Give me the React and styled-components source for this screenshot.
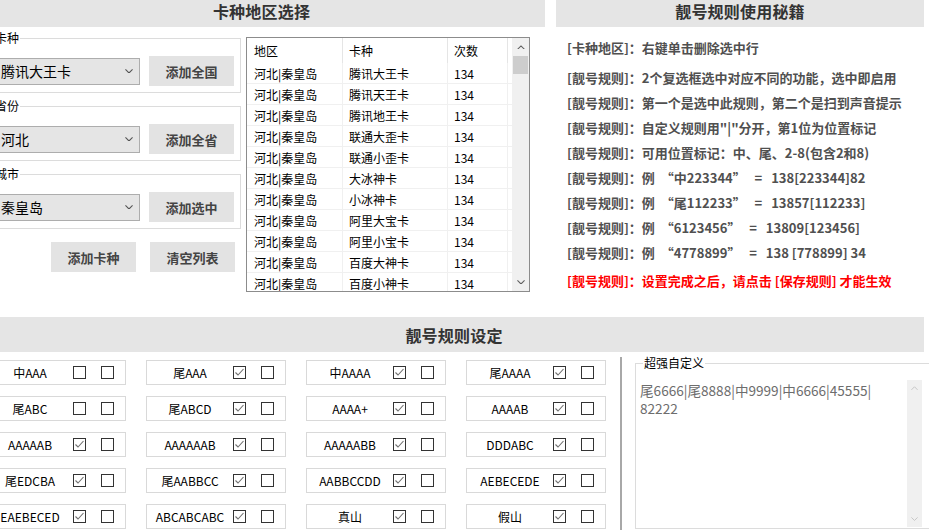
import React from "react";
import styled, { createGlobalStyle } from "styled-components";

const Global = createGlobalStyle`
  html, body { margin: 0; padding: 0; background: #fff; }
  body { font-family: "Noto Sans CJK SC", "Noto Sans", sans-serif; }
  * { box-sizing: border-box; }
`;

const Root = styled.div`
  width: 929px;
  height: 530px;
  overflow: hidden;
  background: #fff;
  color: #000;
`;

const Top = styled.div`
  display: flex;
  height: 317px;
`;

const LeftPanel = styled.section`
  flex: none;
  width: 567px;
  margin-left: -22px;
`;

const RightPanel = styled.section`
  flex: none;
  width: 368px;
  margin-left: 11px;
`;

const Header = styled.div`
  height: 35px;
  margin-top: ${(p) => p.$offset || 0}px;
  padding-top: ${(p) => (p.$offset ? 2 : 0)}px;
  background: #e5e5e5;
  display: flex;
  align-items: center;
  justify-content: center;
  font-size: 16px;
  line-height: 16px;
  font-weight: bold;
  color: #333;
  letter-spacing: 0.2px;
`;

const LeftBody = styled.div`
  display: flex;
  align-items: flex-start;
  gap: 5px;
  padding-left: 8px;
  padding-top: 4px;
`;

const FormColumn = styled.div`
  width: 255px;
  flex: none;
`;

const Group = styled.fieldset`
  margin: 0;
  padding: 11px 6px 6px 11px;
  border: 1px solid #dcdcdc;
  min-width: 0;
  & + & { margin-top: 6px; }
`;

const Legend = styled.legend`
  padding: 0 1px;
  margin-left: ${(p) => p.$ml ?? -4}px;
  font-size: 12px;
  line-height: 14px;
  color: #000;
`;

const FieldRow = styled.div`
  display: flex;
  align-items: center;
  gap: 9px;
  height: 30px;
`;

const Combo = styled.div`
  width: 142px;
  height: 27px;
  background: #e5e5e5;
  border: 1px solid #adadad;
  display: flex;
  align-items: center;
  justify-content: space-between;
  padding: 0 6px 0 2px;
  font-size: 14px;
  color: #000;
`;

const Button = styled.div`
  width: 85px;
  height: 30px;
  flex: none;
  background: #e3e3e3;
  display: flex;
  align-items: center;
  justify-content: center;
  font-size: 13px;
  font-weight: bold;
  color: #444;
`;

const ButtonsRow = styled.div`
  display: flex;
  justify-content: flex-end;
  gap: 14px;
  margin-top: 13px;
  padding-right: 6px;
`;

const List = styled.div`
  margin-top: 6px;
  width: 284px;
  height: 255px;
  border: 1px solid #8c8c8c;
  display: flex;
  flex: none;
`;

const Table = styled.div`
  flex: 1;
  display: grid;
  grid-template-columns: 96px 105px 60px 1fr;
  grid-template-rows: 25px;
  grid-auto-rows: 21px;
  align-content: start;
  overflow: hidden;
  font-size: 12px;
`;

const HeadCell = styled.div`
  display: flex;
  align-items: center;
  padding-left: ${(p) => p.$pad ?? 7}px;
  border-right: ${(p) => (p.$last ? "none" : "1px solid #e5e5e5")};
`;

const Cell = styled.div`
  display: flex;
  align-items: center;
  padding-left: ${(p) => p.$pad ?? 7}px;
  border-right: ${(p) => (p.$last ? "none" : "1px solid #f0f0f0")};
  border-bottom: 1px solid #f0f0f0;
  white-space: nowrap;
`;

const VScroll = styled.div`
  width: ${(p) => p.$w || 17}px;
  flex: none;
  background: #f0f0f0;
  display: flex;
  flex-direction: column;
  align-items: center;
  margin-top: ${(p) => p.$mt || 0}px;
`;

const Arrow = styled.div`
  height: ${(p) => p.$h || 18}px;
  width: 100%;
  display: flex;
  align-items: center;
  justify-content: center;
`;

const Thumb = styled.div`
  width: 15px;
  height: 18px;
  background: #cdcdcd;
`;

const Spacer = styled.div`
  flex: 1;
`;

const Tips = styled.div`
  padding: 8px 0 0 11px;
`;

const Tip = styled.div`
  height: 25px;
  line-height: 25px;
  font-size: 13px;
  font-weight: bold;
  color: ${(p) => (p.$red ? "#ff0000" : "#505050")};
  white-space: pre;
  margin-bottom: ${(p) => p.$mb || 0}px;
  margin-top: ${(p) => p.$mt || 0}px;
`;

const Bottom = styled.section`
  margin-left: -16px;
  width: 940px;
`;

const BottomHeader = styled(Header)`
  width: 940px;
`;

const BottomBody = styled.div`
  display: flex;
  align-items: flex-start;
  height: 178px;
  padding-left: 2px;
  padding-top: 8px;
`;

const RuleGrid = styled.div`
  display: grid;
  grid-template-columns: repeat(4, 140px);
  grid-auto-rows: 25px;
  column-gap: 20px;
  row-gap: 11px;
  flex: none;
`;

const Rule = styled.div`
  border: 1px solid #d9d9d9;
  display: flex;
  align-items: center;
`;

const RuleLabel = styled.div`
  width: 86px;
  text-align: center;
  font-size: 12px;
  white-space: nowrap;
  color: #000;
`;

const Box = styled.span`
  width: 13px;
  height: 13px;
  border: 1px solid #333;
  background: #fff;
  display: inline-flex;
  align-items: center;
  justify-content: center;
  flex: none;
  & + & { margin-left: 15px; }
`;

const Divider = styled.div`
  width: 2px;
  align-self: stretch;
  margin-top: -3px;
  margin-left: 14px;
  background: #a8a8a8;
  flex: none;
`;

const CustomGroup = styled.fieldset`
  margin: -4px 0 0 13px;
  padding: 8px 0 0 0;
  border: 1px solid #dcdcdc;
  width: 320px;
  height: 173px;
  flex: none;
  min-width: 0;
`;

const TextArea = styled.div`
  width: 286px;
  height: 149px;
  display: flex;
  background: #fff;
`;

const TextBody = styled.div`
  flex: 1;
  padding: 3px 4px 0 4px;
  font-size: 13.6px;
  line-height: 18px;
  color: #6d6d6d;
`;

const Chevron = ({ up, color = "#606060", size = 9 }) => (
  <svg width={size} height={size * 0.6} viewBox="0 0 9 5.4">
    <path
      d={up ? "M0.5 5 L4.5 1 L8.5 5" : "M0.5 0.5 L4.5 4.5 L8.5 0.5"}
      fill="none"
      stroke={color}
      strokeWidth="1.2"
    />
  </svg>
);

const Check = ({ on }) => (
  <Box>
    {on && (
      <svg width="11" height="11" viewBox="0 0 11 11">
        <path d="M1.5 5.5 L4 8 L9.5 2" fill="none" stroke="#6f6f6f" strokeWidth="1.1" />
      </svg>
    )}
  </Box>
);

const groups = [
  { legend: "卡种", value: "腾讯大王卡", btn: "添加全国" },
  { legend: "省份", value: "河北", btn: "添加全省" },
  { legend: "城市", value: "秦皇岛", btn: "添加选中" },
];

const cards = [
  "腾讯大王卡", "腾讯天王卡", "腾讯地王卡", "联通大歪卡", "联通小歪卡",
  "大冰神卡", "小冰神卡", "阿里大宝卡", "阿里小宝卡", "百度大神卡", "百度小神卡",
];

const tips = [
  "[卡种地区]：右键单击删除选中行",
  "[靓号规则]：2个复选框选中对应不同的功能，选中即启用",
  "[靓号规则]：第一个是选中此规则，第二个是扫到声音提示",
  "[靓号规则]：自定义规则用\"|\"分开，第1位为位置标记",
  "[靓号规则]：可用位置标记：中、尾、2-8(包含2和8)",
  "[靓号规则]：例  “中223344”   =   138[223344]82",
  "[靓号规则]：例  “尾112233”   =   13857[112233]",
  "[靓号规则]：例  “6123456”   =   13809[123456]",
  "[靓号规则]：例  “4778899”   =   138 [778899] 34",
];

const rules = [
  ["中AAA", false], ["尾AAA", true], ["中AAAA", true], ["尾AAAA", true],
  ["尾ABC", false], ["尾ABCD", true], ["AAAA+", true], ["AAAAB", true],
  ["AAAAAB", true], ["AAAAAAB", true], ["AAAAABB", true], ["DDDABC", true],
  ["尾EDCBA", true], ["尾AABBCC", true], ["AABBCCDD", true], ["AEBECEDE", true],
  ["EAEBECED", true], ["ABCABCABC", true], ["真山", true], ["假山", true],
];

const customText = "尾6666|尾8888|中9999|中6666|45555|\u200B82222";

export default function App() {
  return (
    <Root>
      <Global />
      <Top>
        <LeftPanel>
          <Header $offset={-8}>卡种地区选择</Header>
          <LeftBody>
            <FormColumn>
              {groups.map((g) => (
                <Group key={g.legend}>
                  <Legend>{g.legend}</Legend>
                  <FieldRow>
                    <Combo>
                      <span>{g.value}</span>
                      <Chevron color="#555" size={8} />
                    </Combo>
                    <Button>{g.btn}</Button>
                  </FieldRow>
                </Group>
              ))}
              <ButtonsRow>
                <Button>添加卡种</Button>
                <Button>清空列表</Button>
              </ButtonsRow>
            </FormColumn>
            <List>
              <Table>
                <HeadCell>地区</HeadCell>
                <HeadCell $pad={6}>卡种</HeadCell>
                <HeadCell $pad={6}>次数</HeadCell>
                <HeadCell $last />
                {cards.map((c, i) => (
                  <React.Fragment key={i}>
                    <Cell>河北|秦皇岛</Cell>
                    <Cell $pad={6}>{c}</Cell>
                    <Cell $pad={6}>134</Cell>
                    <Cell $last />
                  </React.Fragment>
                ))}
              </Table>
              <VScroll>
                <Arrow><Chevron up color="#606060" size={8} /></Arrow>
                <Thumb />
                <Spacer />
                <Arrow><Chevron color="#606060" size={8} /></Arrow>
              </VScroll>
            </List>
          </LeftBody>
        </LeftPanel>
        <RightPanel>
          <Header $offset={-8}>靓号规则使用秘籍</Header>
          <Tips>
            {tips.map((t, i) => (
              <Tip key={i} $mb={i === 0 ? 5 : 0}>{t}</Tip>
            ))}
            <Tip $red $mt={3}>[靓号规则]：设置完成之后，请点击 [保存规则] 才能生效</Tip>
          </Tips>
        </RightPanel>
      </Top>
      <Bottom>
        <BottomHeader>靓号规则设定</BottomHeader>
        <BottomBody>
          <RuleGrid>
            {rules.map(([name, on]) => (
              <Rule key={name}>
                <RuleLabel>{name}</RuleLabel>
                <Check on={on} />
                <Check on={false} />
              </Rule>
            ))}
          </RuleGrid>
          <Divider />
          <CustomGroup>
            <Legend $ml={7}>超强自定义</Legend>
            <TextArea>
              <TextBody>{customText}</TextBody>
              <VScroll $w={15} $mt={2}>
                <Arrow $h={16}><Chevron up color="#c4c4c4" size={7} /></Arrow>
                <Spacer />
                <Arrow $h={16}><Chevron color="#c4c4c4" size={7} /></Arrow>
              </VScroll>
            </TextArea>
          </CustomGroup>
        </BottomBody>
      </Bottom>
    </Root>
  );
}
